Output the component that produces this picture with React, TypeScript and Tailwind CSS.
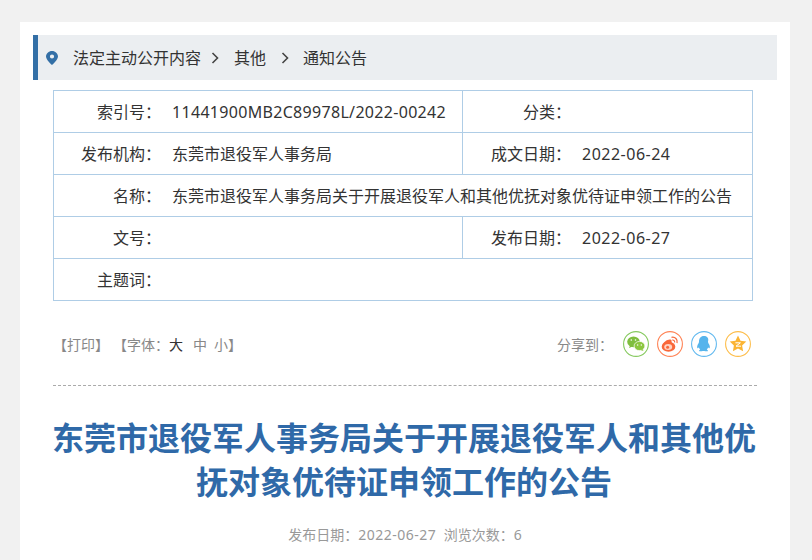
import React from 'react';

const Chevron = () => (
  <svg width="8" height="12" viewBox="0 0 8 12" fill="none" stroke="#444" strokeWidth="1.6" className="block">
    <path d="M1.5 1 L6.5 6 L1.5 11" />
  </svg>
);

const Pin = () => (
  <svg width="12" height="14" viewBox="0 0 12 14" className="block">
    <path
      fillRule="evenodd"
      d="M6 0C2.700 0 0 2.500 0 5.500 0 9 6 14 6 14s6-5 6-8.500C12 2.500 9.300 0 6 0Zm0 7.600A2.100 2.100 0 1 1 6 3.400 2.100 2.100 0 0 1 6 7.600Z"
      fill="#336fa6"
    />
  </svg>
);

const ShareIcon = ({ color, children }: { color: string; children: React.ReactNode }) => (
  <svg width="26" height="26" viewBox="0 0 26 26" className="block">
    <circle cx="13" cy="13" r="12.4" fill="#fff" stroke={color} strokeWidth="1.1" />
    {children}
  </svg>
);

const Cell = ({
  label,
  children,
  colSpan,
  right,
  className,
}: {
  label: string;
  children?: React.ReactNode;
  colSpan?: number;
  right?: boolean;
  className?: string;
}) => (
  <td colSpan={colSpan} className="border border-[#afcde6]">
    <div className="flex items-center">
      <span className={`shrink-0 text-right ${right ? 'w-[108px]' : 'w-[107px]'}`}>{label}</span>
      <span className={`ml-[11px] whitespace-nowrap ${className ?? ''}`}>{children}</span>
    </div>
  </td>
);

export default function App() {
  return (
    <div className="h-[560px] overflow-hidden bg-[#f1f1f1] pl-[20px] pr-[22px] pt-[22px] font-['Noto_Sans','Noto_Sans_CJK_SC',sans-serif] text-[16px] text-[#333]">
      <div className="h-[538px] bg-white px-[13px] pt-[13px]">
        {/* Breadcrumb */}
        <div className="flex h-[45px] items-center border-l-[5px] border-[#336fa6] bg-[#ebeef1] pl-[8px]">
          <Pin />
          <span className="ml-[15px]">法定主动公开内容</span>
          <span className="ml-[10px]"><Chevron /></span>
          <span className="ml-[15px]">其他</span>
          <span className="ml-[15px]"><Chevron /></span>
          <span className="ml-[14px]">通知公告</span>
        </div>

        {/* Info table */}
        <table className="ml-[20px] mt-[10px] w-[700px] table-fixed border-collapse">
          <colgroup>
            <col className="w-[409px]" />
            <col />
          </colgroup>
          <tbody>
            <tr className="h-[42px]">
              <Cell label="索引号：" className="tracking-[0.31px]">11441900MB2C89978L/2022-00242</Cell>
              <Cell label="分类：" right />
            </tr>
            <tr className="h-[42px]">
              <Cell label="发布机构：">东莞市退役军人事务局</Cell>
              <Cell label="成文日期：" right className="tracking-[0.5px]">2022-06-24</Cell>
            </tr>
            <tr className="h-[42px]">
              <Cell label="名称：" colSpan={2}>东莞市退役军人事务局关于开展退役军人和其他优抚对象优待证申领工作的公告</Cell>
            </tr>
            <tr className="h-[42px]">
              <Cell label="文号：" />
              <Cell label="发布日期：" right className="tracking-[0.5px]">2022-06-27</Cell>
            </tr>
            <tr className="h-[42px]">
              <Cell label="主题词：" colSpan={2} />
            </tr>
          </tbody>
        </table>

        {/* Tools */}
        <div className="mt-[30px] flex h-[26px] items-center justify-between pl-[20px] pr-[26px] text-[14px] text-[#888]">
          <div className="flex items-center">
            <span>【打印】</span>
            <span className="ml-[4px]">【字体：</span>
            <span className="text-[#333]">大</span>
            <span className="ml-[10px]">中</span>
            <span className="ml-[7px]">小</span>
            <span>】</span>
          </div>
          <div className="flex items-center">
            <span>分享到：</span>
            <div className="ml-[10px] flex gap-[8px]">
              <ShareIcon color="#86c95f">
                <ellipse cx="10.500" cy="10.800" rx="6.300" ry="5.400" fill="#7fbe3f" />
                <path d="M7 14.500l-1 2.500 3.500-1.500Z" fill="#7fbe3f" />
                <ellipse cx="16.500" cy="15" rx="5.400" ry="4.600" fill="#8cc63f" stroke="#fff" strokeWidth="0.700" />
                <path d="M19.500 18l1 2-3-1Z" fill="#8cc63f" />
                <circle cx="8.300" cy="9" r="0.800" fill="#fff" />
                <circle cx="12.500" cy="9" r="0.800" fill="#fff" />
                <circle cx="14.700" cy="14" r="0.700" fill="#fff" />
                <circle cx="18.300" cy="14" r="0.700" fill="#fff" />
              </ShareIcon>
              <ShareIcon color="#ff8355">
                <ellipse cx="11.500" cy="15.800" rx="6.800" ry="5" fill="#f9683a" />
                <path d="M5 15C6 11 10.500 8 13.500 8.500c1.500.4 1.200 2 .8 3.500Z" fill="#f9683a" />
                <ellipse cx="11.200" cy="16" rx="4" ry="3" fill="#ffd3c2" />
                <circle cx="10.600" cy="16.200" r="1.500" fill="#f9683a" />
                <path d="M14.500 6.300c3.500-.8 6.500 2 5.500 5.700" fill="none" stroke="#f9683a" strokeWidth="1.300" />
                <path d="M15.200 9c1.600-.3 2.800.9 2.400 2.500" fill="none" stroke="#f9683a" strokeWidth="1.100" />
              </ShareIcon>
              <ShareIcon color="#62b9ef">
                <path
                  d="M13 5C9.500 5 8 7.500 8 10.500c0 1-.5 1.800-1.200 3-.8 1.600-.9 3.400-.2 3.700.4.200.9-.3 1.200-.9.300 1 .8 1.800 1.400 2.400-.8.300-1.300.8-1.100 1.200.3.500 2.400.6 3.600.1.500-.1 1.100-.1 1.600 0 1.200.5 3.300.4 3.600-.1.200-.4-.3-.9-1.100-1.200.6-.6 1.100-1.400 1.400-2.400.3.6.8 1.100 1.200.9.700-.3.600-2.100-.2-3.700-.7-1.200-1.200-2-1.200-3C18 7.500 16.500 5 13 5Z"
                  fill="#56b4ec"
                />
              </ShareIcon>
              <ShareIcon color="#fdbd4a">
                <path d="M13 4.500l2.500 5.300 5.800.8-4.200 4 1 5.700-5.100-2.700-5.100 2.700 1-5.700-4.200-4 5.800-.8Z" fill="#fbb433" />
                <path d="M10.400 11.800h5l-4.400 3.400h5" fill="none" stroke="#fff" strokeWidth="1" />
              </ShareIcon>
            </div>
          </div>
        </div>

        <div className="mx-[20px] mt-[28px] border-t border-dashed border-[#aaa]" />

        {/* Title */}
        <h1 className="ml-[19px] mr-[21px] mt-[30px] text-center text-[32px] font-bold leading-[44px] text-[#2f69a8]">
          东莞市退役军人事务局关于开展退役军人和其他优抚对象优待证申领工作的公告
        </h1>

        <div className="mt-[20px] text-center text-[14px] text-[#999]">
          发布日期：<span className="tracking-[0.5px]">2022-06-27</span>&nbsp;&nbsp;浏览次数：6
        </div>
      </div>
    </div>
  );
}
